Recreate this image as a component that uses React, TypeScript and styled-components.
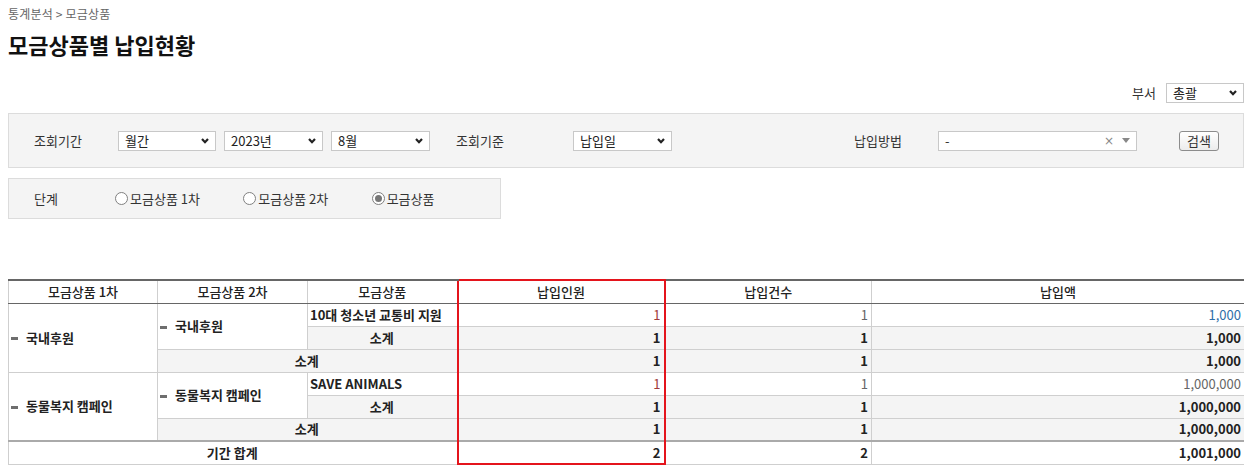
import React from 'react';
import styled, { createGlobalStyle, css } from 'styled-components';

const GlobalStyle = createGlobalStyle`
  * { box-sizing: border-box; }
  body {
    margin: 8px;
    background: #fff;
    color: #333;
    font-family: "Noto Sans CJK KR", "Noto Sans", "Liberation Sans", sans-serif;
    font-size: 13px;
  }
`;

const Breadcrumb = styled.div`
  font-size: 12px;
  line-height: 12px;
  color: #666;
  letter-spacing: 0.2px;
`;

const Title = styled.h1`
  margin: 12px 0 0;
  font-size: 22px;
  line-height: 24px;
  font-weight: 700;
  color: #111;
`;

const DeptRow = styled.div`
  display: flex;
  justify-content: flex-end;
  align-items: center;
  gap: 10px;
  margin-top: 27px;
  height: 20px;
`;

const Label = styled.span<{ $w?: number }>`
  display: inline-block;
  width: ${p => (p.$w ? `${p.$w}px` : 'auto')};
  flex-shrink: 0;
  line-height: 16px;
  color: #333;
`;

const SelectBox = styled.div<{ $w: number }>`
  position: relative;
  display: flex;
  align-items: center;
  width: ${p => p.$w}px;
  height: 20px;
  padding: 0 6px;
  border: 1px solid #c8c8c8;
  background: #fff;
  line-height: 16px;
  color: #222;
  flex-shrink: 0;
`;

const SelectText = styled.span`
  flex: 1;
`;

const Chevron = () => (
  <svg width="8" height="6" viewBox="0 0 8 6">
    <polyline points="1,1 4,4.2 7,1" fill="none" stroke="#222" strokeWidth="2.2" />
  </svg>
);

const FakeSelect = ({ w, value }: { w: number; value: string }) => (
  <SelectBox $w={w}>
    <SelectText>{value}</SelectText>
    <Chevron />
  </SelectBox>
);

const Panel = styled.div<{ $w?: number; $h: number }>`
  display: flex;
  align-items: center;
  width: ${p => (p.$w ? `${p.$w}px` : '100%')};
  height: ${p => p.$h}px;
  margin-top: 10px;
  padding-left: 25px;
  background: #f4f4f4;
  border: 1px solid #dcdcdc;
`;

const Group = styled.div<{ $ml?: number; $gap?: number }>`
  display: flex;
  align-items: center;
  gap: ${p => p.$gap ?? 8}px;
  margin-left: ${p => p.$ml ?? 0}px;
`;

const Select2 = styled.div`
  display: flex;
  align-items: center;
  width: 199px;
  height: 20px;
  padding: 0 6px;
  border: 1px solid #c8c8c8;
  background: #fff;
  color: #333;
  line-height: 16px;
`;

const Clear = styled.span`
  color: #888;
  font-size: 12px;
  margin-right: 8px;
  font-family: "DejaVu Sans", sans-serif;
`;

const Button = styled.button`
  width: 40px;
  height: 20px;
  margin-left: 42px;
  padding: 0;
  border: 1px solid #8c8c8c;
  border-radius: 3px;
  background: linear-gradient(#ffffff, #ececec);
  font-family: inherit;
  font-size: 13px;
  line-height: 16px;
  color: #333;
`;

const RadioItem = styled.label`
  display: flex;
  align-items: center;
  gap: 2px;
  width: 131px;
  line-height: 16px;
  color: #333;
`;

const RadioCircle = styled.span<{ $checked?: boolean }>`
  position: relative;
  width: 13px;
  height: 13px;
  border-radius: 50%;
  border: 1px solid #808080;
  background: #fff;
  ${p =>
    p.$checked &&
    css`
      &::after {
        content: '';
        position: absolute;
        left: 2px;
        top: 2px;
        width: 7px;
        height: 7px;
        border-radius: 50%;
        background: #777;
      }
    `}
`;

const Table = styled.table`
  margin-top: 60px;
  width: 1236px;
  border-collapse: collapse;
  table-layout: fixed;
  border-bottom: 1px solid #777;
`;

const Th = styled.th<{ $hl?: boolean }>`
  height: 23px;
  padding: 0;
  border-top: 2px solid #666;
  border-bottom: 1px solid #666;
  border-left: 1px solid #cfcfcf;
  border-right: 1px solid #cfcfcf;
  font-weight: 500;
  color: #222;
  line-height: 16px;
  background: #fff;
  ${p =>
    p.$hl &&
    css`
      border-top: 2px solid #e4141c;
      border-left: 2px solid #e4141c;
      border-right: 2px solid #e4141c;
    `}
`;

const Td = styled.td<{
  $align?: 'left' | 'center' | 'right';
  $bold?: boolean;
  $gray?: boolean;
  $color?: string;
  $hl?: boolean;
  $hlBottom?: boolean;
  $totalTop?: boolean;
}>`
  height: 23px;
  padding: 0 3px 0 2px;
  border: 1px solid #cfcfcf;
  text-align: ${p => p.$align ?? 'left'};
  font-weight: ${p => (p.$bold ? 700 : 400)};
  color: ${p => p.$color ?? '#222'};
  background: ${p => (p.$gray ? '#f4f4f4' : '#fff')};
  line-height: 16px;
  white-space: nowrap;
  ${p =>
    p.$totalTop &&
    css`
      border-top: 2px solid #aaa;
    `}
  ${p =>
    p.$hl &&
    css`
      border-left: 2px solid #e4141c;
      border-right: 2px solid #e4141c;
    `}
  ${p =>
    p.$hlBottom &&
    css`
      border-bottom: 2px solid #e4141c;
    `}
`;

const Dash = styled.span`
  display: inline-block;
  width: 7px;
  height: 3px;
  margin-right: 8px;
  vertical-align: middle;
  background: #6e6e6e;
`;

type Group1 = {
  g1: string;
  g2: string;
  item: string;
  amount: string;
  amountColor: string;
};

const groups: Group1[] = [
  { g1: '국내후원', g2: '국내후원', item: '10대 청소년 교통비 지원', amount: '1,000', amountColor: '#2f6ea8' },
  { g1: '동물복지 캠페인', g2: '동물복지 캠페인', item: 'SAVE ANIMALS', amount: '1,000,000', amountColor: '#666' },
];

export default function App() {
  return (
    <>
      <GlobalStyle />
      <Breadcrumb>통계분석 &gt; 모금상품</Breadcrumb>
      <Title>모금상품별 납입현황</Title>

      <DeptRow>
        <Label>부서</Label>
        <FakeSelect w={78} value="총괄" />
      </DeptRow>

      <Panel $h={55}>
        <Label $w={84}>조회기간</Label>
        <Group $gap={8}>
          <FakeSelect w={98} value="월간" />
          <FakeSelect w={99} value="2023년" />
          <FakeSelect w={99} value="8월" />
        </Group>
        <Group $ml={26} $gap={0}>
          <Label $w={117}>조회기준</Label>
          <FakeSelect w={99} value="납입일" />
        </Group>
        <Group $ml={182} $gap={0}>
          <Label $w={84}>납입방법</Label>
          <Select2>
            <SelectText>-</SelectText>
            <Clear>×</Clear>
            <svg width="8" height="5" viewBox="0 0 8 5">
              <polygon points="0,0 8,0 4,5" fill="#888" />
            </svg>
          </Select2>
        </Group>
        <Button>검색</Button>
      </Panel>

      <Panel $w={493} $h={41}>
        <Label $w={81}>단계</Label>
        <RadioItem>
          <RadioCircle />
          모금상품 1차
        </RadioItem>
        <RadioItem>
          <RadioCircle />
          모금상품 2차
        </RadioItem>
        <RadioItem>
          <RadioCircle $checked />
          모금상품
        </RadioItem>
      </Panel>

      <Table>
        <colgroup>
          <col style={{ width: 149 }} />
          <col style={{ width: 150 }} />
          <col style={{ width: 150 }} />
          <col style={{ width: 207 }} />
          <col style={{ width: 207 }} />
          <col style={{ width: 373 }} />
        </colgroup>
        <thead>
          <tr>
            <Th>모금상품 1차</Th>
            <Th>모금상품 2차</Th>
            <Th>모금상품</Th>
            <Th $hl>납입인원</Th>
            <Th>납입건수</Th>
            <Th>납입액</Th>
          </tr>
        </thead>
        <tbody>
          {groups.map(g => (
            <React.Fragment key={g.g1}>
              <tr>
                <Td rowSpan={3} $bold>
                  <Dash />
                  {g.g1}
                </Td>
                <Td rowSpan={2} $bold>
                  <Dash />
                  {g.g2}
                </Td>
                <Td $bold>{g.item}</Td>
                <Td $align="right" $hl $color="#a03a3a">1</Td>
                <Td $align="right" $color="#666">1</Td>
                <Td $align="right" $color={g.amountColor}>{g.amount}</Td>
              </tr>
              <tr>
                <Td $align="center" $bold $gray>소계</Td>
                <Td $align="right" $bold $gray $hl>1</Td>
                <Td $align="right" $bold $gray>1</Td>
                <Td $align="right" $bold $gray>{g.amount}</Td>
              </tr>
              <tr>
                <Td colSpan={2} $align="center" $bold $gray>소계</Td>
                <Td $align="right" $bold $gray $hl>1</Td>
                <Td $align="right" $bold $gray>1</Td>
                <Td $align="right" $bold $gray>{g.amount}</Td>
              </tr>
            </React.Fragment>
          ))}
          <tr>
            <Td colSpan={3} $align="center" $bold $totalTop>기간 합계</Td>
            <Td $align="right" $bold $totalTop $hl $hlBottom>2</Td>
            <Td $align="right" $bold $totalTop>2</Td>
            <Td $align="right" $bold $totalTop>1,001,000</Td>
          </tr>
        </tbody>
      </Table>
    </>
  );
}
